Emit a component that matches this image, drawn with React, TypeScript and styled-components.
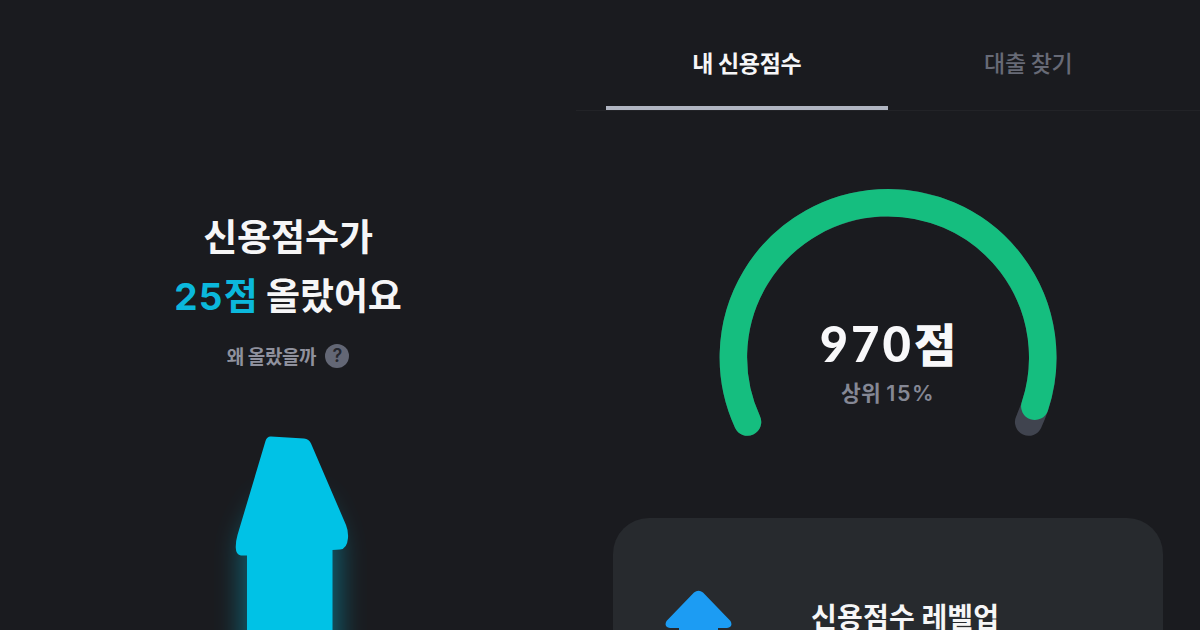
import { useState } from 'react';
import styled, { createGlobalStyle } from 'styled-components';

const tabs = ['내 신용점수', '대출 찾기'];

export default function App() {
    const [active, setActive] = useState(0);

    return (
        <>
            <GlobalStyle />
            <Page>
                <ChangePanel>
                    <Title>신용점수가</Title>
                    <Title>
                        <Point><Digits>25</Digits>점</Point> 올랐어요
                    </Title>
                    <WhyButton>
                        왜 올랐을까
                        <HelpMark>?</HelpMark>
                    </WhyButton>
                    <RisingArrow />
                </ChangePanel>
                <ScorePanel>
                    <TabBar>
                        {tabs.map((tab, i) => (
                            <Tab key={tab} $active={i === active} onClick={() => setActive(i)}>
                                {tab}
                            </Tab>
                        ))}
                    </TabBar>
                    <GaugeWrapper>
                        <Gauge />
                        <Score>
                            <ScoreDigits>970</ScoreDigits>점
                        </Score>
                        <Rank>
                            상위 <RankDigits>15%</RankDigits>
                        </Rank>
                    </GaugeWrapper>
                    <Card>
                        <LevelUpIcon />
                        <CardTitle>신용점수 레벨업</CardTitle>
                    </Card>
                </ScorePanel>
            </Page>
        </>
    );
}

const RisingArrow = () => (
    <ArrowSvg width="240" height="230" viewBox="168 400 240 230">
        <defs>
            <filter id="glow" x="-60%" y="-40%" width="220%" height="180%">
                <feGaussianBlur stdDeviation="14" />
            </filter>
        </defs>
        <path d="M264 500 H320 L338 540 V690 H243 V540 Z" fill="#00c2e6" opacity="0.45" filter="url(#glow)" />
        <path
            d="M271 436.500 L304 438.600 Q309 439 311 443.500 L346 525 Q348.500 531 348 538 Q347 549 340 549.500 L332.500 550 V640 H247 V555.500 L241 555.500 Q236 555 235.800 548 Q235.500 542 237.500 535 L265.500 441 Q267 436.200 271 436.500 Z"
            fill="#00c2e6"
        />
    </ArrowSvg>
);

const Gauge = () => (
    <GaugeSvg width="340" height="252" viewBox="717.500 187 340 252" fill="none" strokeWidth="27.500" strokeLinecap="round">
        <path d="M747 422 A154.700 154.700 0 1 1 1028.200 422" stroke="#40444f" />
        <path d="M747 422 A154.700 154.700 0 1 1 1034.300 406.300" stroke="#15be7f" />
    </GaugeSvg>
);

const LevelUpIcon = () => (
    <svg width="68" height="60" viewBox="664 589 68 60">
        <path
            d="M694 592.500 Q698.500 589 703 592.500 L730.500 621 Q733.500 627 727 628 H718 V649 H679 V628 H670 Q663.500 627 666.500 621 Z"
            fill="#1c9cf3"
        />
    </svg>
);

const GlobalStyle = createGlobalStyle`
  body {
    margin: 0;
    overflow: hidden;
    background: #1a1b1f;
  }
  * {
    box-sizing: border-box;
  }
`;

const Page = styled.main`
  display: flex;
  width: 1200px;
  height: 630px;
  overflow: hidden;
  background: #1a1b1f;
  font-family: 'Noto Sans CJK KR', sans-serif;
`;

const ChangePanel = styled.section`
  display: flex;
  flex-direction: column;
  align-items: center;
  width: 576px;
  padding-top: 206px;
`;

const Title = styled.h1`
  margin: 0;
  font-size: 37px;
  font-weight: 700;
  line-height: 59px;
  letter-spacing: -0.1px;
  white-space: pre;
  color: #f6f6f7;
`;

const Point = styled.span`
  color: #0bb8dc;
`;

const Digits = styled.span`
  font-family: Inter, sans-serif;
  font-weight: 700;
  font-size: 37px;
  letter-spacing: 1.3px;
`;

const WhyButton = styled.button`
  display: flex;
  align-items: center;
  gap: 9px;
  height: 30px;
  margin-top: 16px;
  padding: 0;
  border: 0;
  background: none;
  font-family: inherit;
  font-size: 19px;
  font-weight: 700;
  letter-spacing: -0.4px;
  line-height: 28px;
  color: #8f919d;
`;

const HelpMark = styled.span`
  display: flex;
  align-items: center;
  justify-content: center;
  width: 24px;
  height: 24px;
  border-radius: 50%;
  background: #636775;
  font-family: Inter, sans-serif;
  font-size: 18px;
  font-weight: 600;
  color: #24262d;
`;

const ArrowSvg = styled.svg`
  flex-shrink: 0;
  margin-top: 30px;
`;

const ScorePanel = styled.section`
  display: flex;
  flex-direction: column;
  align-items: center;
  width: 624px;
`;

const TabBar = styled.nav`
  display: flex;
  flex-shrink: 0;
  width: 100%;
  height: 111px;
  padding: 18px 31px 0 30px;
  border-bottom: 1px solid #222327;
`;

const Tab = styled.button<{ $active: boolean }>`
  flex: 1;
  padding: 0;
  border: 0;
  border-bottom: 4px solid ${({ $active }) => ($active ? '#b0b5c1' : 'transparent')};
  background: none;
  font-family: inherit;
  font-size: 23px;
  font-weight: ${({ $active }) => ($active ? 700 : 500)};
  letter-spacing: -0.3px;
  color: ${({ $active }) => ($active ? '#f6f6f7' : '#676a76')};
`;

const GaugeWrapper = styled.div`
  display: grid;
  flex-shrink: 0;
  justify-items: center;
  grid-template-rows: 126px 59px 67px;
  width: 340px;
  height: 252px;
  margin-top: 76px;
`;

const GaugeSvg = styled.svg`
  grid-row: 1 / -1;
  grid-column: 1;
`;

const Score = styled.strong`
  grid-row: 2;
  grid-column: 1;
  font-size: 46px;
  font-weight: 900;
  line-height: 58px;
  color: #f8f8fa;
`;

const ScoreDigits = styled.span`
  font-family: Lato, sans-serif;
  font-size: 49px;
  font-weight: 900;
  letter-spacing: 3px;
`;

const Rank = styled.span`
  grid-row: 3;
  grid-column: 1;
  font-size: 21.5px;
  font-weight: 700;
  line-height: 40px;
  letter-spacing: 0.3px;
  color: #858895;
`;

const RankDigits = styled.span`
  font-family: Inter, sans-serif;
  font-weight: 600;
  letter-spacing: 1.5px;
`;

const Card = styled.article`
  display: flex;
  flex-shrink: 0;
  align-items: flex-start;
  gap: 79px;
  width: 550px;
  height: 200px;
  margin-top: 79px;
  padding: 71px 51px 0;
  border-radius: 36px;
  background: #272a2e;
`;

const CardTitle = styled.h2`
  margin: 7px 0 0;
  font-size: 28px;
  font-weight: 700;
  line-height: 40px;
  letter-spacing: 0.2px;
  color: #f6f6f7;
`;
